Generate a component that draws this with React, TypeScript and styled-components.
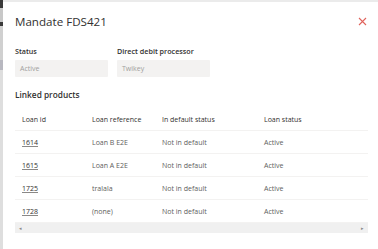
import * as React from 'react';
import styled, { createGlobalStyle } from 'styled-components';

const GlobalStyle = createGlobalStyle`
  html, body {
    margin: 0;
    padding: 0;
    background: #ffffff;
    overflow: hidden;
  }
  body {
    font-family: "Open Sans", "Noto Sans", sans-serif;
    color: #323130;
  }
`;

const Page = styled.div`
  display: flex;
  width: 378px;
  height: 249px;
`;

const Backdrop = styled.div`
  width: 3px;
  flex: none;
  background: linear-gradient(
    to bottom,
    #3a3a3a 0px, #3a3a3a 8px,
    #c8c8c8 8px, #c8c8c8 22px,
    #3a3a3a 22px, #3a3a3a 26px,
    #d0d0d0 26px, #d0d0d0 60px,
    #b8b8c0 60px, #b8b8c0 70px,
    #dedede 70px
  );
`;

const Dialog = styled.div`
  flex: 1;
  border-top: 2px solid #ebebeb;
  padding: 0 10px 0 12px;
`;

const Header = styled.div`
  display: flex;
  align-items: center;
  justify-content: space-between;
  height: 38px;
`;

const Title = styled.h1`
  margin: 0;
  font-size: 11.6px;
  font-weight: 400;
  color: #323130;
`;

const CloseButton = styled.button`
  border: none;
  background: none;
  padding: 0;
  width: 9px;
  height: 9px;
  display: flex;
  margin-right: 1px;
`;

const Fields = styled.div`
  display: grid;
  grid-template-columns: 93px 93px;
  column-gap: 9px;
  margin-top: 5px;
`;

const Field = styled.div`
  display: flex;
  flex-direction: column;
`;

const Label = styled.label`
  font-size: 7.2px;
  font-weight: 600;
  color: #323130;
  height: 13px;
  line-height: 13px;
`;

const ReadOnlyInput = styled.div`
  height: 17px;
  line-height: 17px;
  margin-top: 2px;
  background: #f3f2f1;
  border-radius: 1px;
  padding-left: 5px;
  font-size: 7px;
  color: #a19f9d;
`;

const Section = styled.h2`
  margin: 11px 0 0;
  font-size: 8.3px;
  font-weight: 600;
  line-height: 14px;
  color: #323130;
`;

const Table = styled.div`
  width: 353px;
  margin-top: 6px;
`;

const Row = styled.div<{ $head?: boolean }>`
  display: grid;
  grid-template-columns: 70px 70px 102px 1fr;
  height: 22px;
  align-items: center;
  border-bottom: 1px solid #f3f2f1;
  font-size: 7px;
  color: ${p => (p.$head ? '#323130' : '#605e5c')};
`;

const Cell = styled.div`
  padding-left: 7px;
  white-space: nowrap;
`;

const LoanLink = styled.a`
  color: #323130;
  text-decoration: underline;
  text-decoration-color: #8a8886;
`;

const Scrollbar = styled.div`
  height: 10px;
  background: #f0f0f0;
  display: flex;
  align-items: center;
  justify-content: space-between;
  padding: 0 4px;
  font-size: 5px;
  color: #888888;
`;

const columns = ['Loan id', 'Loan reference', 'In default status', 'Loan status'];

const loans = [
  { id: '1614', ref: 'Loan B E2E', def: 'Not in default', status: 'Active' },
  { id: '1615', ref: 'Loan A E2E', def: 'Not in default', status: 'Active' },
  { id: '1725', ref: 'tralala', def: 'Not in default', status: 'Active' },
  { id: '1728', ref: '(none)', def: 'Not in default', status: 'Active' },
];

export default function App() {
  return (
    <>
      <GlobalStyle />
      <Page>
        <Backdrop />
        <Dialog>
          <Header>
            <Title>Mandate FDS421</Title>
            <CloseButton aria-label="Close">
              <svg width="9" height="9" viewBox="0 0 9 9">
                <path d="M1 1 L8 8 M8 1 L1 8" stroke="#e0635c" strokeWidth="1.1" />
              </svg>
            </CloseButton>
          </Header>

          <Fields>
            <Field>
              <Label>Status</Label>
              <ReadOnlyInput>Active</ReadOnlyInput>
            </Field>
            <Field>
              <Label>Direct debit processor</Label>
              <ReadOnlyInput>Twikey</ReadOnlyInput>
            </Field>
          </Fields>

          <Section>Linked products</Section>

          <Table>
            <Row $head>
              {columns.map(c => (
                <Cell key={c}>{c}</Cell>
              ))}
            </Row>
            {loans.map(l => (
              <Row key={l.id}>
                <Cell>
                  <LoanLink href="#">{l.id}</LoanLink>
                </Cell>
                <Cell>{l.ref}</Cell>
                <Cell>{l.def}</Cell>
                <Cell>{l.status}</Cell>
              </Row>
            ))}
            <Scrollbar>
              <span>◂</span>
              <span>▸</span>
            </Scrollbar>
          </Table>
        </Dialog>
      </Page>
    </>
  );
}
